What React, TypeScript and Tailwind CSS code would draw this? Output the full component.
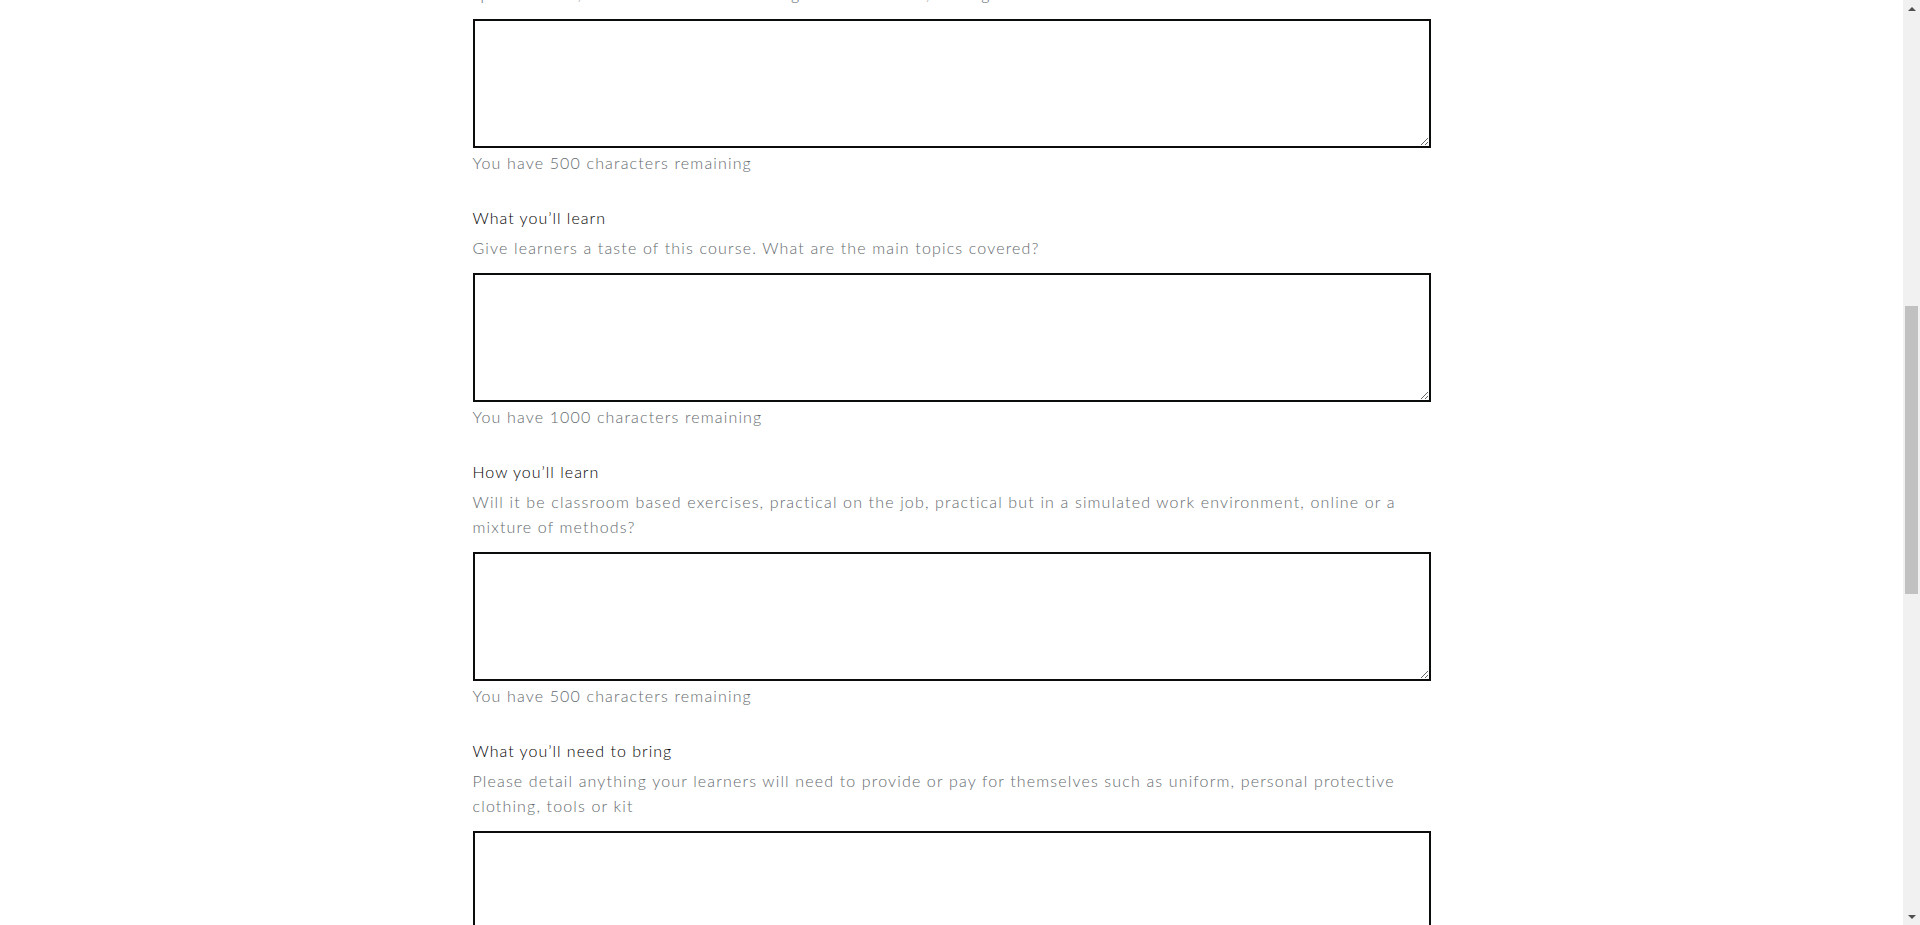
type Field = {
  id: string;
  label: string;
  hint: string;
  limit: number;
};

const fields: Field[] = [
  {
    id: "what-learn",
    label: "What you’ll learn",
    hint: "Give learners a taste of this course. What are the main topics covered?",
    limit: 1000,
  },
  {
    id: "how-learn",
    label: "How you’ll learn",
    hint: "Will it be classroom based exercises, practical on the job, practical but in a simulated work environment, online or a mixture of methods?",
    limit: 500,
  },
];

const hintCls = "text-[16px] leading-[25px] font-light tracking-[1.15px] text-[#646a6e]";
const labelCls = "text-[16px] leading-[25px] font-light tracking-[1px] text-black";

function Counter({ limit }: { limit: number }) {
  return <p className={`mt-[2px] ${hintCls}`}>You have {limit} characters remaining</p>;
}

function Box({ id }: { id: string }) {
  return (
    <textarea
      id={id}
      className="block w-full h-[129px] border-2 border-[#0b0c0c] p-2 bg-white outline-none"
    />
  );
}

function FormField({ field, showCounter = true }: { field: Field; showCounter?: boolean }) {
  return (
    <div className="mt-[30px]">
      <label htmlFor={field.id} className={`block ${labelCls} mb-[5px]`}>
        {field.label}
      </label>
      <p className={`${hintCls} mb-[13px]`}>{field.hint}</p>
      <Box id={field.id} />
      {showCounter && <Counter limit={field.limit} />}
    </div>
  );
}

function Scrollbar() {
  return (
    <div className="w-[17px] h-full bg-[#f1f1f1] flex flex-col items-center shrink-0">
      <div className="h-[17px] w-full flex items-center justify-center">
        <svg width="8" height="4" viewBox="0 0 8 4">
          <path d="M0 4 L4 0 L8 4 Z" fill="#505050" />
        </svg>
      </div>
      <div className="mt-[289px] h-[288px] w-[13px] bg-[#c1c1c1]" />
      <div className="flex-1" />
      <div className="h-[17px] w-full flex items-center justify-center">
        <svg width="8" height="4" viewBox="0 0 8 4">
          <path d="M0 0 L8 0 L4 4 Z" fill="#505050" />
        </svg>
      </div>
    </div>
  );
}

export default function App() {
  return (
    <div className="h-[925px] flex bg-white overflow-hidden font-['Lato',sans-serif]">
      <main className="flex-1 h-full overflow-hidden">
        <div className="w-[958px] mx-auto">
          {/* tail of the entry requirements field, scrolled partly out of view */}
          <div className="-mt-[19px]">
            <p className={`${hintCls} mb-[13px]`}>
              specific skills, attributes or evidence? e.g. DBS clearance, driving licence
            </p>
            <Box id="entry-requirements" />
            <Counter limit={500} />
          </div>

          {fields.map((f) => (
            <FormField key={f.id} field={f} />
          ))}

          <FormField
            field={{
              id: "need-to-bring",
              label: "What you’ll need to bring",
              hint: "Please detail anything your learners will need to provide or pay for themselves such as uniform, personal protective clothing, tools or kit",
              limit: 500,
            }}
            showCounter={false}
          />
        </div>
      </main>
      <Scrollbar />
    </div>
  );
}
